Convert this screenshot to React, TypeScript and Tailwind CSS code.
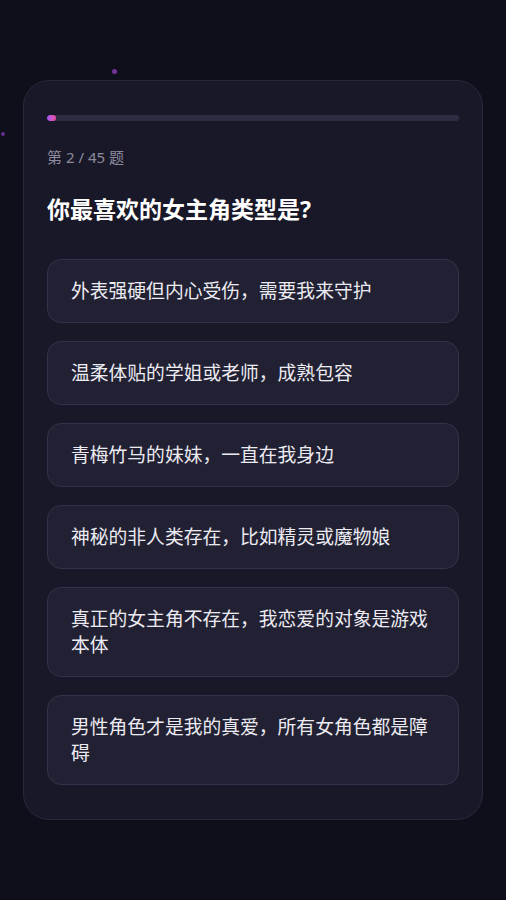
import React from "react";

const options = [
  "外表强硬但内心受伤，需要我来守护",
  "温柔体贴的学姐或老师，成熟包容",
  "青梅竹马的妹妹，一直在我身边",
  "神秘的非人类存在，比如精灵或魔物娘",
  "真正的女主角不存在，我恋爱的对象是游戏本体",
  "男性角色才是我的真爱，所有女角色都是障碍",
];

const font = "font-['Noto_Sans','Noto_Sans_CJK_SC',sans-serif]";

export default function App() {
  const current = 2;
  const total = 45;
  return (
    <div className={`relative min-h-screen w-full bg-[#0f0e1b] flex items-center justify-center px-[23px] overflow-hidden ${font}`}>
      {/* 背景粒子 */}
      <span className="absolute left-[112px] top-[69px] h-[5px] w-[5px] rounded-full bg-[#8b3fb8] opacity-80" />
      <span className="absolute left-[1px] top-[132px] h-[4px] w-[4px] rounded-full bg-[#7a3aa8] opacity-80" />

      <div className="relative w-full rounded-[26px] border border-[#2a293c] bg-[#191828] px-[23px] pt-[34px] pb-[34px]">
        <div className="h-[6px] w-full rounded-full bg-[#2e2c42] overflow-hidden">
          <div
            className="h-full rounded-full bg-gradient-to-r from-[#a855f7] to-[#ec4899]"
            style={{ width: `${((current - 1) / total) * 100}%` }}
          />
        </div>

        <p className="mt-[26px] text-[15px] leading-5 text-[#8c8b9d]">第 {current} / {total} 题</p>

        <h1 className="mt-[26px] text-[23px] leading-8 font-bold text-white">你最喜欢的女主角类型是?</h1>

        <div className="mt-[34px] flex flex-col gap-[18px]">
          {options.map((o) => (
            <button
              key={o}
              className="w-full rounded-[14px] border border-[#33324a] bg-[#222133] px-[23px] py-[18px] text-left text-[18.8px] leading-[26px] text-[#ecebf2]"
            >
              {o}
            </button>
          ))}
        </div>
      </div>
    </div>
  );
}
